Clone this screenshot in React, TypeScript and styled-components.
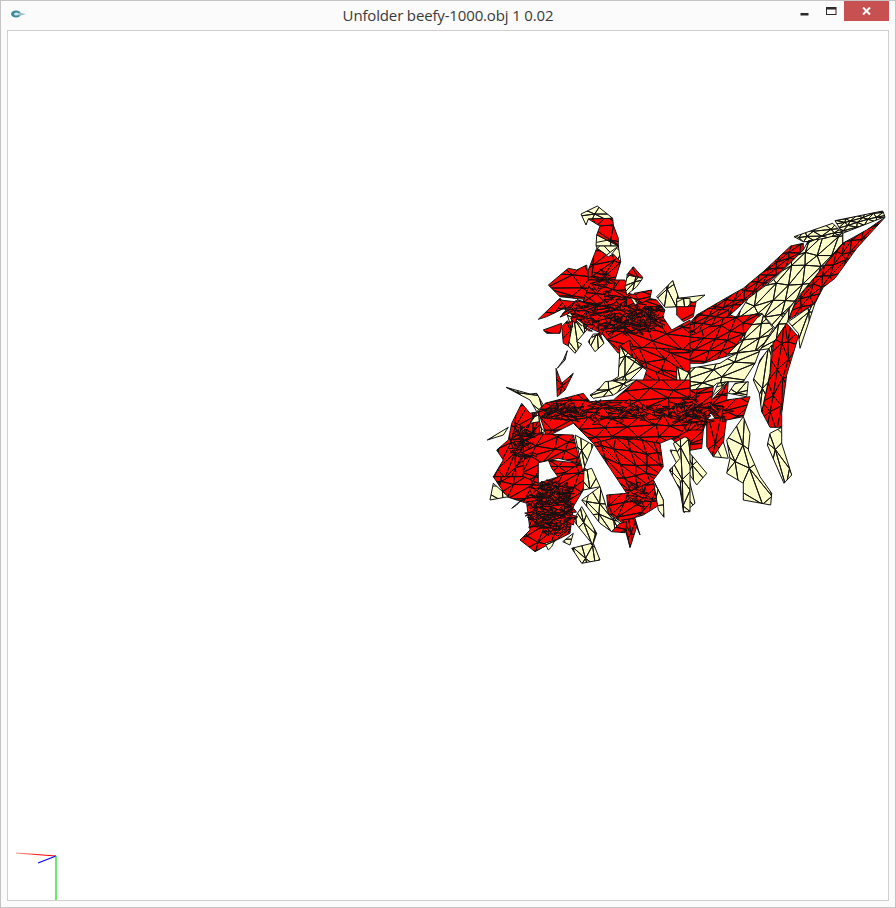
import React from "react";
import styled, { createGlobalStyle } from "styled-components";

const Global = createGlobalStyle`
  html, body { margin: 0; padding: 0; background: #fff; }
  #root { width: 896px; height: 908px; }
`;

const Window = styled.div`
  box-sizing: border-box;
  width: 896px;
  height: 908px;
  display: flex;
  flex-direction: column;
  background: #fbfbfb;
  border: 1px solid #c4c4c4;
`;
const TitleBar = styled.div`
  height: 29px;
  flex: none;
  position: relative;
  display: flex;
  align-items: flex-start;
  justify-content: center;
`;
const AppIcon = styled.svg`
  position: absolute;
  left: 9px;
  top: 8px;
`;
const Title = styled.div`
  font: 15px/15px "Open Sans", sans-serif;
  color: #3a3a3a;
  margin-top: 7px;
  letter-spacing: -0.15px;
`;
const Controls = styled.div`
  position: absolute;
  right: 6px;
  top: 0;
  display: flex;
  height: 20px;
`;
const ControlButton = styled.div<{ $close?: boolean; $w: number }>`
  width: ${(p) => p.$w}px;
  height: 20px;
  display: flex;
  align-items: center;
  justify-content: center;
  background: ${(p) => (p.$close ? "#c75050" : "transparent")};
`;
const Body = styled.div`
  flex: 1;
  display: flex;
  padding: 0 6px 6px;
  min-height: 0;
`;
const Canvas = styled.div`
  flex: 1;
  border: 1px solid #cfcfcf;
  background: #fff;
  display: flex;
`;
const Scene = styled.svg`
  display: block;
  width: 100%;
  height: 100%;
`;

type P = [number, number];
const ORIGIN: Record<string, P> = { a: [480, 200], b: [480, 380], c: [660, 200] };

let seed = 12345;
const rnd = () => {
  seed = (seed * 1664525 + 1013904223) >>> 0;
  return seed / 4294967296;
};

const parse = (crop: string, s: string): P[] =>
  s.split(" ").map((t) => {
    const [x, y] = t.split(",").map(Number);
    return [ORIGIN[crop][0] + x / 3, ORIGIN[crop][1] + y / 3] as P;
  });

const str = (t: P[]) => t.map((p) => `${p[0].toFixed(1)},${p[1].toFixed(1)}`).join(" ");

// jittered triangle grid laid along the long axis of a shape
const gridMesh = (pts: P[], L: number): P[][] => {
  const n = pts.length;
  const cx = pts.reduce((s, p) => s + p[0], 0) / n;
  const cy = pts.reduce((s, p) => s + p[1], 0) / n;
  let xx = 0, yy = 0, xy = 0;
  pts.forEach((p) => {
    xx += (p[0] - cx) ** 2;
    yy += (p[1] - cy) ** 2;
    xy += (p[0] - cx) * (p[1] - cy);
  });
  const th = 0.5 * Math.atan2(2 * xy, xx - yy);
  const c = Math.cos(th), s = Math.sin(th);
  const loc = pts.map((p) => [(p[0] - cx) * c + (p[1] - cy) * s, -(p[0] - cx) * s + (p[1] - cy) * c]);
  const us = loc.map((p) => p[0]), vs = loc.map((p) => p[1]);
  const u0 = Math.min(...us) - L, u1 = Math.max(...us) + L;
  const v0 = Math.min(...vs) - L, v1 = Math.max(...vs) + L;
  const du = L * 2.6, dv = L;
  const nu = Math.ceil((u1 - u0) / du) + 1, nv = Math.ceil((v1 - v0) / dv) + 1;
  const g: P[][] = [];
  for (let i = 0; i <= nu; i++) {
    g.push([]);
    for (let j = 0; j <= nv; j++) {
      const u = u0 + (i + (j % 2) * 0.5 + (rnd() - 0.5) * 0.5) * du;
      const v = v0 + (j + (rnd() - 0.5) * 0.5) * dv;
      g[i].push([cx + u * c - v * s, cy + u * s + v * c]);
    }
  }
  const out: P[][] = [];
  for (let i = 0; i < nu; i++)
    for (let j = 0; j < nv; j++) {
      const a = g[i][j], b = g[i + 1][j], d = g[i][j + 1], e = g[i + 1][j + 1];
      if (j % 2) {
        out.push([a, b, e], [a, e, d]);
      } else {
        out.push([a, b, d], [b, e, d]);
      }
    }
  return out;
};

const SHAPES: [string, "r" | "y", number, string][] = [
  // far arm
  ["c", "y", 12, "525,62 668,33 675,50 548,100"],
  ["c", "y", 16, "402,110 518,70 548,100 548,130 495,125 430,125"],
  ["c", "r", 15, "430,130 392,138 310,215 250,265 205,290 145,325 110,345 210,345 265,295 340,235 430,150"],
  ["c", "y", 26, "430,150 340,240 265,295 210,380 305,340 345,385 410,295 470,225 548,130 548,100 495,115 445,122"],
  ["c", "y", 28, "345,385 410,295 385,360 380,370 340,430 335,445 300,450"],
  ["c", "r", 18, "548,130 470,225 410,300 385,360 465,310 490,262 525,235 590,145 675,52 620,90"],
  ["c", "y", 50, "385,365 465,310 420,445 415,400"],
  ["c", "r", 26, "380,370 415,410 380,525 365,640 365,682 330,682 305,635 330,525 340,430"],
  ["c", "y", 40, "335,435 330,520 305,635 298,580 280,540 300,480"],
  ["c", "y", 26, "210,380 305,340 340,385 300,450 230,460 195,470 225,440"],
  ["c", "y", 30, "60,510 180,490 230,460 300,450 285,490 250,545 205,545 170,550 160,560 40,580"],
  ["c", "r", 22, "45,420 110,345 210,345 225,350 300,342 225,440 195,470 130,490 60,490 50,450"],
  ["c", "r", 18, "60,395 145,325 205,330 210,345 110,400 45,420"],
  // legs
  ["c", "y", 42, "330,700 365,682 365,730 395,825 372,850 322,735"],
  ["c", "y", 42, "200,720 250,650 270,700 265,750 300,830 335,880 332,915 250,900 250,850 200,820 210,775"],
  ["c", "y", 36, "28,810 90,760 140,820 110,855 80,810 105,910 72,938 60,870"],
  ["c", "y", 40, "30,750 75,755 90,760 50,790"],
  ["c", "r", 30, "0,585 160,560 150,640 130,690 40,720 0,700"],
  ["c", "r", 36, "85,690 130,690 125,745 65,755 40,720"],
  ["c", "r", 36, "140,660 200,650 190,730 160,770 140,740"],
  ["c", "y", 60, "190,725 205,775 160,770"],
  ["c", "r", 28, "155,600 205,545 200,600 270,590 250,650 200,660 150,640"],
  ["c", "y", 60, "155,590 175,550 205,545"],
  ["c", "y", 26, "205,580 225,550 265,545 260,590"],
  // knob near centre
  ["c", "y", 36, "0,290 38,242 55,295 135,285 108,305 50,320 22,320"],
  ["c", "r", 40, "50,320 108,305 100,350 70,365 50,345"],
  ["c", "r", 30, "0,350 35,390 45,420 50,450 0,410"],
  ["c", "y", 36, "0,455 45,450 45,480 0,480"],
  ["c", "r", 30, "0,485 45,490 60,510 35,580 0,560"],
  // top neck
  ["a", "y", 26, "303,42 352,18 398,55 325,57 318,75"],
  ["a", "r", 24, "325,57 398,55 400,75 360,78"],
  ["a", "r", 36, "360,78 400,75 415,115 415,138 350,105"],
  ["a", "y", 60, "350,105 415,138 348,138"],
  ["a", "y", 30, "348,138 415,138 380,165 352,145"],
  ["a", "y", 40, "415,138 422,185 395,162"],
  ["a", "r", 28, "350,145 385,170 400,162 422,185 405,240 325,240 325,210"],
  ["a", "r", 34, "205,255 265,205 290,210 320,195 325,240 405,240 435,240 445,280 330,300 240,290"],
  ["a", "r", 28, "330,250 445,280 530,300 555,330 300,330"],
  ["a", "r", 34, "175,358 240,295 262,320 200,350"],
  ["a", "r", 30, "190,390 245,370 240,400 200,400"],
  ["a", "r", 30, "245,380 262,362 275,385 265,438 250,430"],
  ["a", "y", 30, "255,325 300,345 320,390 290,425 305,432 285,460 265,438 275,385"],
  ["a", "y", 30, "325,425 340,402 360,402 372,430 345,455"],
  ["a", "r", 26, "440,225 460,200 488,232 465,240"],
  ["a", "y", 26, "442,225 488,235 470,260 440,285 435,262"],
  ["a", "y", 30, "530,290 578,242 595,290 590,320 555,322"],
  ["a", "y", 26, "590,295 630,295 630,320 590,320"],
  ["a", "y", 60, "232,505 250,480 262,452 255,480"],
  ["a", "r", 24, "228,505 245,550 280,520 255,570 232,590"],
  ["a", "r", 32, "240,300 330,310 555,330 548,350 575,390 630,360 630,450 600,470 540,490 450,440 440,430 415,460 365,400 330,385 280,350"],
  ["a", "r", 30, "415,440 450,420 490,500 445,460"],
  ["a", "r", 32, "450,440 630,450 630,570 590,540 490,500"],
  ["a", "y", 30, "420,440 445,460 490,500 420,570 350,570 415,530"],
  ["a", "r", 30, "440,470 490,500 590,540 580,570 480,570 500,510"],
  ["a", "y", 30, "590,500 630,520 630,570 590,570"],
  ["a", "y", 36, "450,290 485,310 465,315"],
  ["a", "r", 26, "462,280 515,270 510,295 485,310"],
  // central mass
  ["b", "y", 34, "78,22 150,42 170,40 190,75 170,95 150,60"],
  ["b", "y", 40, "22,180 85,142 70,165"],
  ["b", "r", 26, "50,210 85,180 95,130 125,70 150,100 175,95 178,122 200,200 175,235 130,290 40,290 70,240"],
  ["b", "r", 28, "175,95 195,70 310,40 330,65 400,60 470,0 630,0 630,120 600,165 540,190 420,170 340,190 280,130 200,170"],
  ["b", "r", 26, "130,160 280,165 300,250 235,235 175,248 175,310 130,290"],
  ["b", "r", 22, "205,240 300,250 235,292 215,265"],
  ["b", "r", 24, "340,190 420,170 540,190 550,260 520,300 480,330 440,340"],
  ["b", "r", 26, "40,290 130,290 175,310 235,290 300,250 350,300 310,330 280,380 270,460 230,480 165,515 120,480 150,450 140,370 80,350"],
  ["b", "r", 26, "380,345 440,340 520,300 550,360 530,380 490,405 440,420 450,500 430,430 385,400"],
  ["b", "r", 22, "425,420 465,415 480,465 470,440 450,503 435,430"],
  ["b", "y", 34, "285,165 340,195 308,275"],
  ["b", "y", 34, "312,272 335,265 360,320 310,330"],
  ["b", "y", 26, "305,360 360,320 385,400 420,430 395,455 360,430"],
  ["b", "r", 26, "395,455 420,430 440,425 435,458"],
  ["b", "y", 26, "280,420 305,380 350,460 340,490 360,540 305,550 275,505 335,490 295,440"],
  ["b", "y", 36, "30,360 40,310 85,350"],
  ["b", "y", 40, "95,385 130,355 110,375"],
  ["b", "y", 30, "205,510 195,490 225,480 215,500"],
  ["b", "y", 30, "248,485 280,460 270,495"],
  ["b", "y", 30, "570,270 600,235 580,190 615,170 630,180 630,395 610,395 600,300"],
  ["b", "y", 36, "520,300 550,360 552,412 535,390"],
  ["b", "y", 26, "330,45 355,30 375,5 420,0 470,0 400,45 340,55"],
  ["b", "y", 30, "150,130 175,95 178,125"],
  ["b", "y", 30, "180,140 195,155 178,160"],
];

const DENSE: [number, number, number, number, number, number][] = [
  [612, 316, 50, 18, 140, 10],
  [632, 322, 26, 11, 60, 9],
  [625, 412, 76, 8, 100, 11],
  [695, 414, 28, 12, 60, 12],
  [551, 508, 21, 26, 260, 8],
  [522, 444, 9, 18, 50, 9],
  [563, 412, 20, 8, 55, 8],
  [640, 495, 8, 12, 16, 8],
  [605, 284, 10, 14, 20, 8],
];

type Piece = { id: string; outline: string; fill: string; tris: string[] };

const buildPieces = (): Piece[] =>
  SHAPES.map(([crop, col, L, s], i) => {
    const pts = parse(crop, s);
    return {
      id: `piece-${i}`,
      outline: str(pts),
      fill: col === "r" ? "#ff0000" : "#ffffcc",
      tris: gridMesh(pts, L / 3).map(str),
    };
  });

const buildDense = (): string[] => {
  const out: string[] = [];
  DENSE.forEach(([cx, cy, rx, ry, n, sz]) => {
    for (let i = 0; i < n; i++) {
      const a = rnd() * Math.PI * 2;
      const r = Math.sqrt(rnd());
      const x = cx + Math.cos(a) * r * rx;
      const y = cy + Math.sin(a) * r * ry;
      out.push(
        str([
          [x, y],
          [x + (rnd() - 0.5) * sz * 2, y + (rnd() - 0.5) * sz * 1.3],
          [x + (rnd() - 0.5) * sz * 2, y + (rnd() - 0.5) * sz * 1.3],
        ]),
      );
    }
  });
  return out;
};

const PIECES = buildPieces();
const DENSE_TRIS = buildDense();

export default function App() {
  return (
    <>
      <Global />
      <Window>
        <TitleBar>
          <AppIcon width="18" height="10" viewBox="0 0 18 10">
            <ellipse cx="6" cy="5" rx="5" ry="3.5" fill="#3d8a9c" />
            <ellipse cx="6.5" cy="5" rx="2.5" ry="1.6" fill="#cfe6ea" />
            <path d="M9 3.5 L16 5 L9 7Z" fill="#9cc0c8" />
          </AppIcon>
          <Title>Unfolder beefy-1000.obj 1 0.02</Title>
          <Controls>
            <ControlButton $w={28}>
              <svg width="9" height="9" viewBox="0 0 9 9">
                <rect x="0.5" y="6" width="8" height="2.5" fill="#2b2b2b" />
              </svg>
            </ControlButton>
            <ControlButton $w={26}>
              <svg width="11" height="9" viewBox="0 0 11 9">
                <rect x="0.5" y="0.5" width="9.5" height="7" fill="none" stroke="#2b2b2b" />
                <rect x="0.5" y="0.5" width="9.5" height="2" fill="#2b2b2b" />
              </svg>
            </ControlButton>
            <ControlButton $w={45} $close>
              <svg width="9" height="8" viewBox="0 0 9 8">
                <path d="M1 0.5 L8 7.5 M8 0.5 L1 7.5" stroke="#fff" strokeWidth="2" />
              </svg>
            </ControlButton>
          </Controls>
        </TitleBar>
        <Body>
          <Canvas>
            <Scene viewBox="8 31 880 869" preserveAspectRatio="xMinYMin meet">
              <defs>
                <linearGradient id="fade" gradientUnits="userSpaceOnUse" x1="16" y1="853" x2="56" y2="856">
                  <stop offset="0" stopColor="#ff9a9a" />
                  <stop offset="0.6" stopColor="#ff0000" />
                </linearGradient>
                {PIECES.map((p) => (
                  <clipPath key={p.id} id={p.id}>
                    <polygon points={p.outline} />
                  </clipPath>
                ))}
              </defs>
              {PIECES.map((p) => (
                <g key={p.id}>
                  <g clipPath={`url(#${p.id})`}>
                    <polygon points={p.outline} fill={p.fill} />
                    {p.tris.map((t, i) => (
                      <polygon key={i} points={t} fill="none" stroke="#111" strokeWidth="1" />
                    ))}
                  </g>
                  <polygon points={p.outline} fill="none" stroke="#111" strokeWidth="1" strokeLinejoin="round" />
                </g>
              ))}
              {DENSE_TRIS.map((t, i) => (
                <polygon key={i} points={t} fill="#ff0000" stroke="#111" strokeWidth="1" strokeLinejoin="round" />
              ))}
              <line x1="16" y1="853" x2="56" y2="856" stroke="url(#fade)" strokeWidth="1.2" />
              <line x1="38" y1="863" x2="56" y2="856" stroke="#0000ff" strokeWidth="1.2" />
              <line x1="56" y1="856" x2="56" y2="900" stroke="#00e000" strokeWidth="1.2" />
            </Scene>
          </Canvas>
        </Body>
      </Window>
    </>
  );
}
